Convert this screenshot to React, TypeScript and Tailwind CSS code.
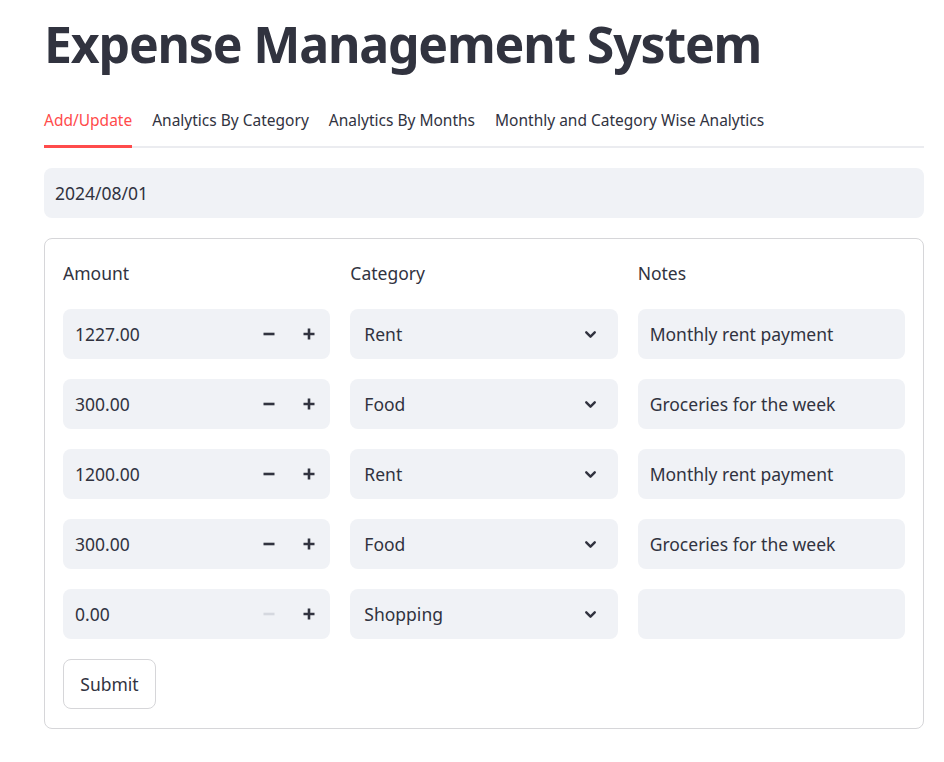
import { ChevronDown } from "lucide-react";

const rows = [
  { amount: "1227.00", category: "Rent", notes: "Monthly rent payment" },
  { amount: "300.00", category: "Food", notes: "Groceries for the week" },
  { amount: "1200.00", category: "Rent", notes: "Monthly rent payment" },
  { amount: "300.00", category: "Food", notes: "Groceries for the week" },
  { amount: "0.00", category: "Shopping", notes: "" },
];

const tabs = [
  "Add/Update",
  "Analytics By Category",
  "Analytics By Months",
  "Monthly and Category Wise Analytics",
];

const Minus = ({ disabled }: { disabled?: boolean }) => (
  <svg width="12" height="12" viewBox="0 0 12 12">
    <path
      d="M0.5 6H11.5"
      stroke={disabled ? "#d5d8df" : "#31333f"}
      strokeWidth="2.6"
    />
  </svg>
);

const Plus = () => (
  <svg width="12" height="12" viewBox="0 0 12 12">
    <path d="M0.5 6H11.5M6 0.5V11.5" stroke="#31333f" strokeWidth="2.6" />
  </svg>
);

const NumberInput = ({ value }: { value: string }) => {
  const zero = value === "0.00";
  return (
    <div className="flex h-[50px] items-center rounded-lg bg-[#f0f2f6] pr-[1px]">
      <span className="flex-1 pl-[12px]">{value}</span>
      <button className="flex h-full w-[40px] items-center justify-center">
        <Minus disabled={zero} />
      </button>
      <button className="flex h-full w-[40px] items-center justify-center">
        <Plus />
      </button>
    </div>
  );
};

const Select = ({ value }: { value: string }) => (
  <div className="flex h-[50px] items-center justify-between rounded-lg bg-[#f0f2f6] pl-[14px] pr-[19px]">
    <span>{value}</span>
    <ChevronDown size={17} strokeWidth={3.4} color="#31333f" />
  </div>
);

const TextInput = ({ value }: { value: string }) => (
  <div className="flex h-[50px] items-center rounded-lg bg-[#f0f2f6] px-[12px]">
    {value}
  </div>
);

export default function App() {
  return (
    <div className="h-[762px] w-[944px] overflow-hidden bg-white font-['Noto_Sans',sans-serif] text-[#31333f]">
      <div className="ml-[44px] w-[880px] pt-[14px]">
        <h1 className="h-[60px] text-[50px] font-bold leading-[60px] tracking-[-1.2px]">
          Expense Management System
        </h1>

        {/* Tabs */}
        <div className="mt-[23px] flex gap-[20px] shadow-[inset_0_-2px_0_#ebecf0]">
          {tabs.map((tab, index) => (
            <div
              key={index}
              className={
                index === 0
                  ? "flex h-[51px] items-center border-b-[3px] border-[#ff4b4b] text-[15.5px] text-[#ff4b4b]"
                  : "flex h-[51px] items-center border-b-[3px] border-transparent text-[15.5px]"
              }
            >
              {tab}
            </div>
          ))}
        </div>

        <div className="mt-[20px] flex h-[50px] items-center rounded-lg bg-[#f0f2f6] px-[11px] text-[17.5px]">
          2024/08/01
        </div>

        {/* Form */}
        <div className="mt-[20px] rounded-lg border border-[#d6d6d9] px-[18px] py-[19px] text-[17.5px]">
          <div className="grid grid-cols-3 gap-x-[20px] gap-y-[20px]">
            <div className="flex h-[31px] items-center">Amount</div>
            <div className="flex h-[31px] items-center">Category</div>
            <div className="flex h-[31px] items-center">Notes</div>
            {rows.map((row, index) => (
              <>
                <NumberInput key={`a${index}`} value={row.amount} />
                <Select key={`c${index}`} value={row.category} />
                <TextInput key={`n${index}`} value={row.notes} />
              </>
            ))}
          </div>
          <button className="mt-[20px] flex h-[50px] w-[93px] items-center justify-center rounded-lg border border-[#d6d6d9] bg-white">
            Submit
          </button>
        </div>
      </div>
    </div>
  );
}
